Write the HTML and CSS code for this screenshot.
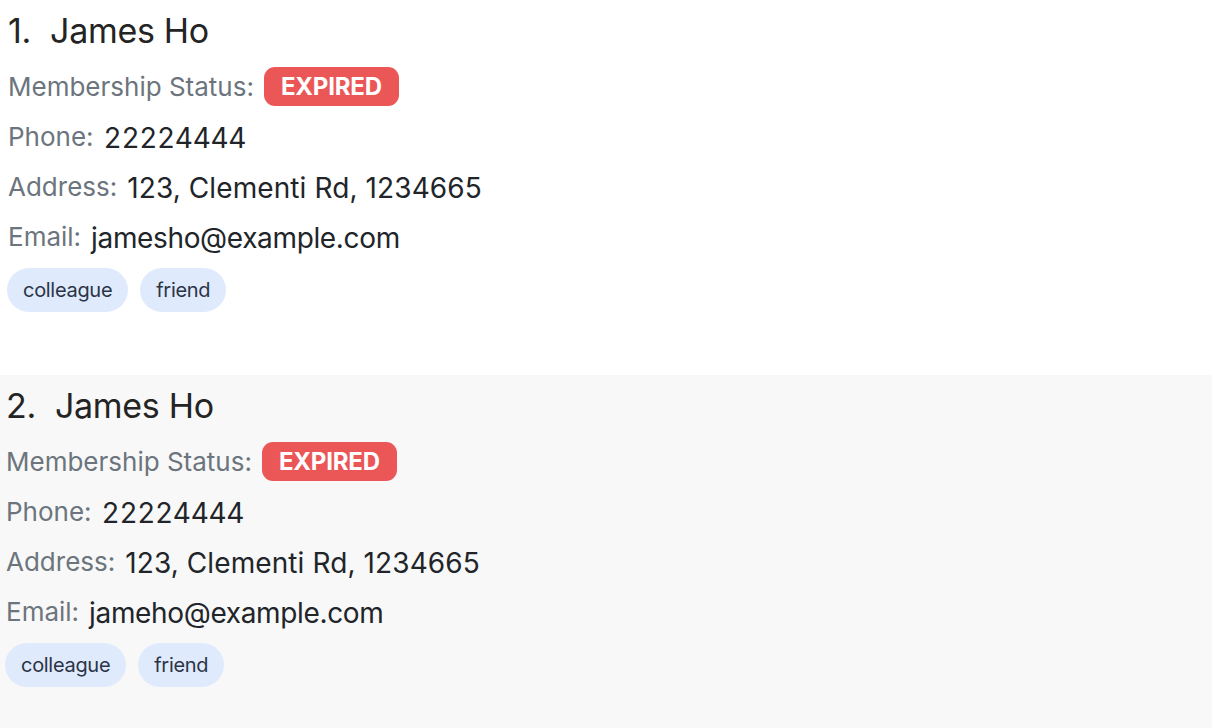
FILE: index.html
```html
<!DOCTYPE html>
<html lang="en">
<head>
<meta charset="utf-8">
<title>Members</title>
<link rel="stylesheet" href="styles.css">
</head>
<body>
<div class="list">
  <div class="card">
    <div class="name"><span class="idx">1.</span>James Ho</div>
    <div class="row"><span class="label">Membership Status:</span><span class="badge">EXPIRED</span></div>
    <div class="row"><span class="label">Phone:</span><span class="value num">22224444</span></div>
    <div class="row"><span class="label">Address:</span><span class="value addr">123, Clementi Rd, 1234665</span></div>
    <div class="row"><span class="label">Email:</span><span class="value">jamesho@example.com</span></div>
    <div class="tags"><span class="tag">colleague</span><span class="tag">friend</span></div>
  </div>
  <div class="card card-alt">
    <div class="name"><span class="idx">2.</span>James Ho</div>
    <div class="row"><span class="label">Membership Status:</span><span class="badge">EXPIRED</span></div>
    <div class="row"><span class="label">Phone:</span><span class="value num">22224444</span></div>
    <div class="row"><span class="label">Address:</span><span class="value addr">123, Clementi Rd, 1234665</span></div>
    <div class="row"><span class="label">Email:</span><span class="value">jameho@example.com</span></div>
    <div class="tags"><span class="tag">colleague</span><span class="tag">friend</span></div>
  </div>
</div>
</body>
</html>
```
FILE: styles.css
```css
html, body {
  margin: 0;
  padding: 0;
  background: #ffffff;
}
body {
  font-family: Inter, "Noto Sans", sans-serif;
  color: #212529;
  width: 1212px;
  height: 728px;
  overflow: hidden;
}
.list {
  display: flex;
  flex-direction: column;
}
.card {
  height: 374px;
  box-sizing: border-box;
  padding: 8px 0 0 8px;
  display: flex;
  flex-direction: column;
  background: #ffffff;
}
.card-alt {
  margin-top: 1px;
  padding-left: 6px;
  background: #f8f8f8;
}
.name {
  font-size: 34px;
  line-height: 46px;
  height: 46px;
  margin-bottom: 7px;
  color: #242424;
  letter-spacing: -0.3px;
}
.idx {
  margin-right: 19px;
}
.row {
  display: flex;
  align-items: center;
  gap: 10px;
  height: 50px;
}
.label {
  font-size: 26px;
  color: #6c757d;
  letter-spacing: 0;
}
.value {
  font-size: 28px;
  color: #212529;
  letter-spacing: -0.35px;
  position: relative;
  top: 2px;
}
.num {
  font-feature-settings: "tnum";
}
.addr {
  letter-spacing: 0.1px;
}
.badge {
  display: inline-flex;
  align-items: center;
  height: 39px;
  padding: 0 17px;
  border-radius: 11px;
  background: #eb5757;
  color: #ffffff;
  font-weight: 700;
  font-size: 24px;
  letter-spacing: -0.2px;
}
.tags {
  display: flex;
  gap: 12px;
  margin-top: 7px;
  margin-left: -1px;
}
.tag {
  display: inline-flex;
  align-items: center;
  height: 44px;
  padding: 0 16px;
  border-radius: 22px;
  background: #dfeafd;
  color: #2b3445;
  font-size: 20px;
  letter-spacing: -0.3px;
}
```
